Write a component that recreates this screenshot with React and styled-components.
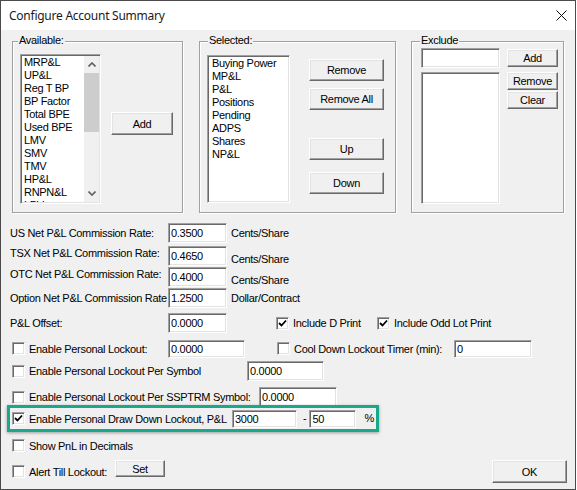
import React from 'react'
import styled, { createGlobalStyle } from 'styled-components'

const GlobalStyle = createGlobalStyle`
  * { box-sizing: border-box; }
  body {
    margin: 0;
    background: #ffffff;
  }
`;

const available = ['MRP&L', 'UP&L', 'Reg T BP', 'BP Factor', 'Total BPE', 'Used BPE', 'LMV', 'SMV', 'TMV', 'HP&L', 'RNPN&L', 'LPV'];
const selected = ['Buying Power', 'MP&L', 'P&L', 'Positions', 'Pending', 'ADPS', 'Shares', 'NP&L'];

const rates = [
    { label: 'US Net P&L Commission Rate:', value: '0.3500', unit: 'Cents/Share', mt: 10, la: 'center', ua: 'center' },
    { label: 'TSX Net P&L Commission Rate:', value: '0.4650', unit: 'Cents/Share', mt: 3, la: 'flex-start', ua: 'flex-end' },
    { label: 'OTC Net P&L Commission Rate:', value: '0.4000', unit: 'Cents/Share', mt: 1, la: 'flex-start', ua: 'flex-end' },
    { label: 'Option Net P&L Commission Rate', value: '1.2500', unit: 'Dollar/Contract', mt: 1, la: 'center', ua: 'center' },
];

const uiFont = `
    font-family: "Liberation Sans", Arial, sans-serif;
    font-size: 11px;
    letter-spacing: -0.3px;
    color: #000;
`;

function Check({ checked }) {
    return (
        <Box>
            {checked && (
                <svg width="9" height="9" viewBox="0 0 9 9">
                    <path d="M1 4 L3.5 6.5 L8 1.5" fill="none" stroke="#000" strokeWidth="1.8" />
                </svg>
            )}
        </Box>
    )
}

function Chevron({ down }) {
    return (
        <svg width="8" height="5" viewBox="0 0 8 5">
            <path d={down ? 'M0.5 0.5 L4 4 L7.5 0.5' : 'M0.5 4.5 L4 1 L7.5 4.5'} fill="none" stroke="#606060" strokeWidth="1.6" />
        </svg>
    )
}

function App() {
  return (
    <Window>
        <GlobalStyle />
        <TitleBar>
            <Title>Configure Account Summary</Title>
            <svg width="11" height="11" viewBox="0 0 11 11">
                <path d="M0.5 0.5 L10.5 10.5 M10.5 0.5 L0.5 10.5" stroke="#111" strokeWidth="1" />
            </svg>
        </TitleBar>

        <Body>
            <TopGroups>
                <Group $w={171} $pl={7} $pt={12}>
                    <Caption $left={5}>Available:</Caption>
                    <ListBox $w={81} $h={150}>
                        <Items $pl={2}>
                            {available.map(item => <Item key={item}>{item}</Item>)}
                        </Items>
                        <ScrollBar>
                            <Arrow><Chevron /></Arrow>
                            <Track><Thumb /></Track>
                            <Arrow><Chevron down /></Arrow>
                        </ScrollBar>
                    </ListBox>
                    <Button $w={62} $h={23} $ml={10} $mt={58}>Add</Button>
                </Group>

                <Group $w={197} $pl={7} $pt={13} $ml={16}>
                    <Caption $left={8}>Selected:</Caption>
                    <ListBox $w={83} $h={148}>
                        <Items $pl={3}>
                            {selected.map(item => <Item key={item}>{item}</Item>)}
                        </Items>
                    </ListBox>
                    <ButtonColumn $ml={19}>
                        <Button $w={75} $h={22} $mt={4}>Remove</Button>
                        <Button $w={75} $h={22} $mt={7}>Remove All</Button>
                        <Button $w={75} $h={22} $mt={28}>Up</Button>
                        <Button $w={75} $h={22} $mt={12}>Down</Button>
                    </ButtonColumn>
                </Group>

                <Group $w={153} $pl={9} $pt={6} $ml={15}>
                    <Caption $left={8}>Exclude</Caption>
                    <ExcludeColumn>
                        <TextInput $w={79} $h={20} defaultValue="" />
                        <ListBox $w={79} $h={132} />
                    </ExcludeColumn>
                    <ButtonColumn $ml={7}>
                        <Button $w={51} $h={18} $mt={1}>Add</Button>
                        <Button $w={51} $h={18} $mt={5}>Remove</Button>
                        <Button $w={51} $h={18} $mt={1}>Clear</Button>
                    </ButtonColumn>
                </Group>
            </TopGroups>

            <Form>
                {rates.map(rate => (
                    <Row key={rate.label} $mt={rate.mt} $h={20}>
                        <FieldLabel $align={rate.la}>{rate.label}</FieldLabel>
                        <TextInput $w={59} $h={20} defaultValue={rate.value} />
                        <Unit $align={rate.ua}>{rate.unit}</Unit>
                    </Row>
                ))}

                <Row $mt={5} $h={20}>
                    <FieldLabel>P&amp;L Offset:</FieldLabel>
                    <TextInput $w={59} $h={20} defaultValue="0.0000" />
                    <CheckItem $w={101} $ml={49}><Check checked /><span>Include D Print</span></CheckItem>
                    <CheckItem><Check checked /><span>Include Odd Lot Print</span></CheckItem>
                </Row>

                <Row $mt={6} $h={19}>
                    <CheckItem $w={156} $ml={2}><Check /><span>Enable Personal Lockout:</span></CheckItem>
                    <TextInput $w={77} $h={18} defaultValue="0.0000" />
                    <CheckItem $w={177} $ml={32}><Check /><span>Cool Down Lockout Timer (min):</span></CheckItem>
                    <TextInput $w={78} $h={18} defaultValue="0" />
                </Row>

                <Row $mt={3} $h={20}>
                    <CheckItem $w={235} $ml={2}><Check /><span>Enable Personal Lockout Per Symbol</span></CheckItem>
                    <TextInput $w={77} $h={20} defaultValue="0.0000" />
                </Row>

                <Row $mt={6} $h={20}>
                    <CheckItem $w={247} $ml={2}><Check /><span>Enable Personal Lockout Per SSPTRM Symbol:</span></CheckItem>
                    <TextInput $w={78} $h={20} defaultValue="0.0000" />
                </Row>

                <Highlight>
                    <CheckItem $w={220} $ml={2}><Check checked /><span>Enable Personal Draw Down Lockout, P&amp;L</span></CheckItem>
                    <TextInput $w={65} $h={18} defaultValue="3000" />
                    <Unit $ml={6}>-</Unit>
                    <TextInput $w={47} $h={18} $ml={3} defaultValue="50" />
                    <Unit $ml={8}>%</Unit>
                </Highlight>

                <Row $mt={6} $h={15}>
                    <CheckItem $ml={2}><Check /><span>Show PnL in Decimals</span></CheckItem>
                </Row>

                <Row $mt={7} $h={23}>
                    <CheckItem $w={103} $ml={2}><Check /><span>Alert Till Lockout:</span></CheckItem>
                    <Button $w={50} $h={17} $top>Set</Button>
                    <Button $w={75} $h={23} $push>OK</Button>
                </Row>
            </Form>
        </Body>
    </Window>
  )
}

const Window = styled.div`
    width: 576px;
    height: 490px;
    border: 1px solid #4a4a4a;
    display: flex;
    flex-direction: column;
    ${uiFont}
`;

const TitleBar = styled.div`
    height: 29px;
    background: #ffffff;
    display: flex;
    align-items: center;
    justify-content: space-between;
    padding: 0 8px 0 8px;
    flex-shrink: 0;
`;

const Title = styled.span`
    font-family: "Noto Sans", "Open Sans", sans-serif;
    font-size: 12px;
    color: #1a1a1a;
    letter-spacing: -0.25px;
`;

const Body = styled.div`
    flex: 1;
    background: #f0f0f0;
    display: flex;
    flex-direction: column;
`;

const TopGroups = styled.div`
    display: flex;
    padding: 11px 0 0 11px;
`;

const Group = styled.div`
    position: relative;
    display: flex;
    align-items: flex-start;
    width: ${p => p.$w}px;
    height: 172px;
    margin-left: ${p => p.$ml || 0}px;
    padding: ${p => p.$pt}px 0 0 ${p => p.$pl}px;
    border: 1px solid #a0a0a0;
    box-shadow: inset 1px 1px 0 #ffffff, 1px 1px 0 #ffffff;
`;

const Caption = styled.span`
    position: absolute;
    top: -8px;
    left: ${p => p.$left}px;
    padding: 0 1px;
    line-height: 13px;
    background: #f0f0f0;
`;

const ListBox = styled.div`
    display: flex;
    width: ${p => p.$w}px;
    height: ${p => p.$h}px;
    background: #ffffff;
    border: 1px solid;
    border-color: #a0a0a0 #ffffff #ffffff #a0a0a0;
    box-shadow: inset 1px 1px 0 #696969, inset -1px -1px 0 #e3e3e3;
    padding: 1px;
    overflow: hidden;
    flex-shrink: 0;
`;

const Items = styled.div`
    flex: 1;
    padding-left: ${p => p.$pl}px;
    overflow: hidden;
`;

const Item = styled.div`
    line-height: 13px;
    white-space: nowrap;
`;

const ScrollBar = styled.div`
    width: 15px;
    display: flex;
    flex-direction: column;
    background: #f0f0f0;
`;

const Arrow = styled.div`
    height: 17px;
    display: flex;
    align-items: center;
    justify-content: center;
`;

const Track = styled.div`
    flex: 1;
`;

const Thumb = styled.div`
    height: 59px;
    background: #cdcdcd;
`;

const Button = styled.button`
    width: ${p => p.$w}px;
    height: ${p => p.$h}px;
    margin: ${p => p.$mt || 0}px 0 0 ${p => p.$ml || 0}px;
    ${p => p.$push && 'margin-left: auto;'}
    ${p => p.$top && 'align-self: flex-start;'}
    padding: 0;
    background: #f0f0f0;
    border: 1px solid;
    border-color: #ffffff #696969 #696969 #ffffff;
    box-shadow: inset -1px -1px 0 #a0a0a0, inset 1px 1px 0 #e3e3e3;
    ${uiFont}
    flex-shrink: 0;
`;

const ButtonColumn = styled.div`
    display: flex;
    flex-direction: column;
    margin-left: ${p => p.$ml}px;
`;

const ExcludeColumn = styled.div`
    display: flex;
    flex-direction: column;
    gap: 4px;
`;

const TextInput = styled.input`
    width: ${p => p.$w}px;
    height: ${p => p.$h}px;
    padding: 0 0 0 2px;
    margin: 0 0 0 ${p => p.$ml || 0}px;
    background: #ffffff;
    border: 1px solid;
    border-color: #a0a0a0 #ffffff #ffffff #a0a0a0;
    box-shadow: inset 1px 1px 0 #696969, inset -1px -1px 0 #e3e3e3;
    ${uiFont}
    outline: none;
    flex-shrink: 0;
`;

const Form = styled.div`
    display: flex;
    flex-direction: column;
    padding: 0 8px 0 9px;
`;

const Row = styled.div`
    display: flex;
    align-items: center;
    height: ${p => p.$h}px;
    margin-top: ${p => p.$mt}px;
`;

const FieldLabel = styled.span`
    width: 158px;
    flex-shrink: 0;
    white-space: nowrap;
    line-height: 13px;
    align-self: ${p => p.$align || 'center'};
    ${p => p.$align === 'flex-start' && 'margin-top: 1px;'}
`;

const Unit = styled.span`
    margin-left: ${p => p.$ml ?? 4}px;
    white-space: nowrap;
    line-height: 13px;
    align-self: ${p => p.$align || 'center'};
`;

const CheckItem = styled.label`
    display: flex;
    align-items: center;
    gap: 4px;
    ${p => p.$w && `width: ${p.$w}px;`}
    margin-left: ${p => p.$ml || 0}px;
    white-space: nowrap;
    flex-shrink: 0;
`;

const Box = styled.span`
    width: 13px;
    height: 13px;
    display: flex;
    align-items: center;
    justify-content: center;
    background: #ffffff;
    border: 1px solid;
    border-color: #a0a0a0 #ffffff #ffffff #a0a0a0;
    box-shadow: inset 1px 1px 0 #696969, inset -1px -1px 0 #e3e3e3;
    flex-shrink: 0;
`;

const Highlight = styled.div`
    display: flex;
    align-items: center;
    width: 372px;
    height: 27px;
    margin: -2px 0 0 -3px;
    border: 3px solid #19a88a;
    box-shadow: 0 1px 3px rgba(0, 0, 0, 0.35);
`;

export default App
